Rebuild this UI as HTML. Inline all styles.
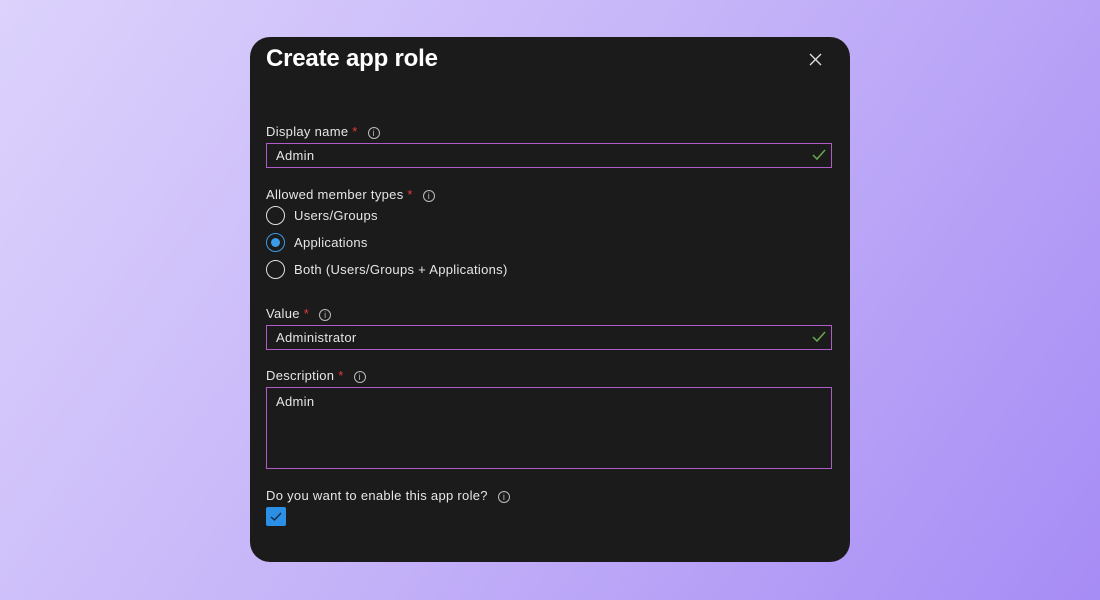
<!DOCTYPE html>
<html><head><style>
*{box-sizing:border-box;margin:0;padding:0}
body{width:1100px;height:600px;overflow:hidden;background:linear-gradient(125deg,#dcd2fc 0%,#c4b2f8 50%,#a68cf5 100%);font-family:"Liberation Sans",sans-serif;position:relative}
.card{position:absolute;left:250px;top:37px;width:600px;height:525px;background:#1c1b1b;border-radius:20px}
.a{position:absolute;color:#e6e6e6;font-size:13px;white-space:nowrap;letter-spacing:0.3px}
.title{position:absolute;left:16px;top:8px;color:#fff;font-size:24px;font-weight:bold;letter-spacing:-0.2px}
.req{color:#e8393f}
.info{display:inline-block;width:12px;height:12px;border:1px solid #bbb;border-radius:50%;font-size:9px;line-height:10px;text-align:center;color:#bbb;vertical-align:0px;margin-left:10px;letter-spacing:0}
.inp{position:absolute;left:16px;width:566px;border:1px solid #b05cc8;background:#1c1b1b}
.inp span{position:absolute;left:9px;top:4px;color:#e6e6e6;font-size:13px;letter-spacing:0.3px}
.chk{position:absolute;right:5px;top:5px}
.radio{position:absolute;left:16px;width:19px;height:19px;border:1.5px solid #e0e0e0;border-radius:50%}
</style></head><body>
<div class="card">
<div class="title">Create app role</div>
<svg style="position:absolute;left:559px;top:16px" width="13" height="13"><path d="M1 1L12 12M12 1L1 12" stroke="#ddd" stroke-width="1.4"/></svg>
<div class="a" style="left:16px;top:87px">Display name <span class="req">*</span><span class="info">i</span></div>
<div class="inp" style="top:106px;height:25px"><span>Admin</span><svg class="chk" width="14" height="12"><path d="M1 6L5 10L13 1" stroke="#6aa84f" stroke-width="1.5" fill="none"/></svg></div>
<div class="a" style="left:16px;top:150px">Allowed member types <span class="req">*</span><span class="info">i</span></div>
<div class="radio" style="top:169px"></div><div class="a" style="left:44px;top:171px">Users/Groups</div>
<div class="radio" style="top:196px;border-color:#3a9be8"><div style="position:absolute;left:3.5px;top:3.5px;width:9px;height:9px;border-radius:50%;background:#3a9be8"></div></div><div class="a" style="left:44px;top:198px">Applications</div>
<div class="radio" style="top:223px"></div><div class="a" style="left:44px;top:225px">Both (Users/Groups + Applications)</div>
<div class="a" style="left:16px;top:269px">Value <span class="req">*</span><span class="info">i</span></div>
<div class="inp" style="top:288px;height:25px"><span>Administrator</span><svg class="chk" width="14" height="12"><path d="M1 6L5 10L13 1" stroke="#6aa84f" stroke-width="1.5" fill="none"/></svg></div>
<div class="a" style="left:16px;top:331px">Description <span class="req">*</span><span class="info">i</span></div>
<div class="inp" style="top:350px;height:82px"><span style="top:6px">Admin</span></div>
<div class="a" style="left:16px;top:451px">Do you want to enable this app role?<span class="info">i</span></div>
<div style="position:absolute;left:16px;top:470px;width:20px;height:19px;background:#2b8fe6;border-radius:2px"><svg width="20" height="19"><path d="M5 10L8.5 13L15 6" stroke="#10263d" stroke-width="1.3" fill="none"/></svg></div>
</div>
</body></html>
